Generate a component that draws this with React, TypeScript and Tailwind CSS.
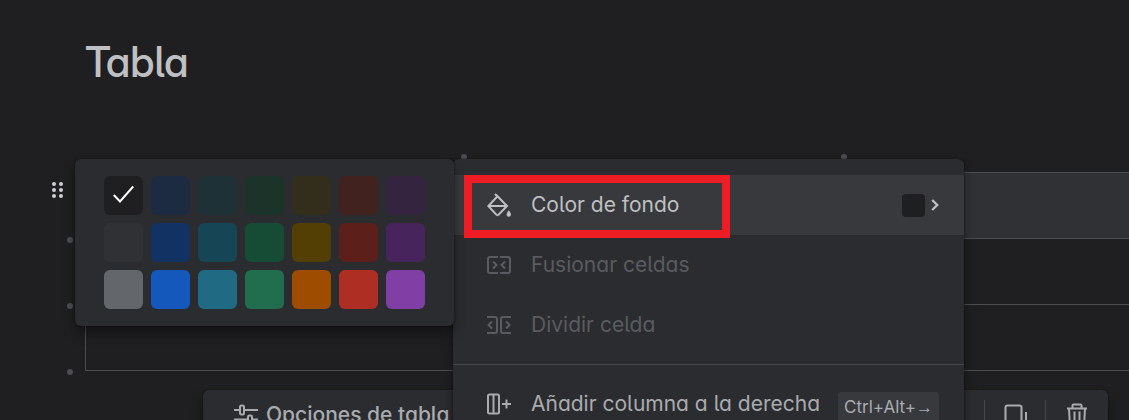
import React, { useState } from 'react';

const swatches = [
  { name: 'Predeterminado', className: 'bg-[#1f1f21]' },
  { name: 'Azul oscuro', className: 'bg-[#1c2b42]' },
  { name: 'Turquesa oscuro', className: 'bg-[#1e3137]' },
  { name: 'Verde oscuro', className: 'bg-[#1c3329]' },
  { name: 'Amarillo oscuro', className: 'bg-[#332e1b]' },
  { name: 'Rojo oscuro', className: 'bg-[#42221f]' },
  { name: 'Morado oscuro', className: 'bg-[#35243f]' },
  { name: 'Gris oscuro', className: 'bg-[#303134]' },
  { name: 'Azul medio', className: 'bg-[#123263]' },
  { name: 'Turquesa medio', className: 'bg-[#164555]' },
  { name: 'Verde medio', className: 'bg-[#164b35]' },
  { name: 'Amarillo medio', className: 'bg-[#533f04]' },
  { name: 'Rojo medio', className: 'bg-[#5d1f1a]' },
  { name: 'Morado medio', className: 'bg-[#48245d]' },
  { name: 'Gris', className: 'bg-[#63666b]' },
  { name: 'Azul', className: 'bg-[#1558bc]' },
  { name: 'Turquesa', className: 'bg-[#206a83]' },
  { name: 'Verde', className: 'bg-[#216e4e]' },
  { name: 'Naranja', className: 'bg-[#9e4c00]' },
  { name: 'Rojo', className: 'bg-[#ae2e24]' },
  { name: 'Morado', className: 'bg-[#803fa5]' },
];

const Icon: React.FC<{ children: React.ReactNode }> = ({ children }) => (
  <svg className="size-6 shrink-0" viewBox="0 0 24 24" fill="none" stroke="currentColor" strokeWidth="2" aria-hidden="true">
    {children}
  </svg>
);

const PaintBucketIcon = () => (
  <Icon>
    <path d="M8 1l2.500 2.500M10.500 3.200L20 13l-8.300 8.600c-.7.7-1.700.7-2.400 0L1.300 13z M1.500 13H20" />
    <path d="M21.800 17.300c1.400 2 2.200 3.200 2.200 4.300a2.200 2.200 0 0 1-4.400 0c0-1.100.8-2.300 2.200-4.300z" fill="currentColor" stroke="none" />
  </Icon>
);

const MergeIcon = () => (
  <Icon>
    <path d="M11 4H3a2 2 0 0 0-2 2v12a2 2 0 0 0 2 2h8M13 4h8a2 2 0 0 1 2 2v12a2 2 0 0 1-2 2h-8" />
    <path d="M6 8.500L9.500 12 6 15.500M18 8.500L14.500 12l3.500 3.500" />
  </Icon>
);

const SplitIcon = () => (
  <Icon>
    <path d="M0 4h8a2 2 0 0 1 2 2v12a2 2 0 0 1-2 2H0M24 4h-8a2 2 0 0 0-2 2v12a2 2 0 0 0 2 2h8" />
    <path d="M5 8.500L1.500 12 5 15.500M19 8.500l3.500 3.500-3.500 3.500" />
  </Icon>
);

const AddColumnIcon = () => (
  <Icon>
    <rect x="1" y="2.500" width="11" height="19" rx="1.500" />
    <path d="M6.500 2.500v19" />
    <path d="M15 12h9M19.500 7.500v9" />
  </Icon>
);

const SlidersIcon = () => (
  <Icon>
    <path d="M0 7h5M11 7h13M0 16.500h13M19 16.500h5" />
    <rect x="6" y="2.500" width="4" height="9" rx="1.500" />
    <rect x="14" y="12.500" width="4" height="9" rx="1.500" />
  </Icon>
);

const CopyIcon = () => (
  <Icon>
    <rect x="2.500" y="2.500" width="16" height="17" rx="2" />
    <path d="M23 9v11a2 2 0 0 1-2 2H9" />
  </Icon>
);

const TrashIcon = () => (
  <Icon>
    <path d="M3 5.500h20M8.500 5.500V2.500a1 1 0 0 1 1-1h7a1 1 0 0 1 1 1v3M5 5.500l.8 14.500a2 2 0 0 0 2 2h10.400a2 2 0 0 0 2-2L21 5.500M10.500 8.500v10M15.500 8.500v10" />
  </Icon>
);

const ResizeDot: React.FC<{ className: string }> = ({ className }) => (
  <span className={`absolute size-1.5 rounded-full bg-[#4b4d51] ${className}`} />
);

const ColorPalette: React.FC = () => {
  const [selected, setSelected] = useState(0);

  return (
    <div className="relative z-10 grid grid-cols-[repeat(7,39px)] gap-2 rounded-md bg-[#2b2c2f] px-[29px] py-[17px] shadow-[0_8px_12px_rgba(1,4,4,0.36),0_0_2px_rgba(1,4,4,0.6)]">
      {swatches.map((swatch, idx) => (
        <button
          key={swatch.name}
          onClick={() => setSelected(idx)}
          aria-label={swatch.name}
          className={`flex size-[39px] items-center justify-center rounded-md text-white ${swatch.className}`}
        >
          {selected === idx && (
            <svg className="size-6" viewBox="0 0 24 24" fill="none" stroke="currentColor" strokeWidth="2" aria-hidden="true">
              <path d="M1.800 11L8 17.500 21.200 2.500" />
            </svg>
          )}
        </button>
      ))}
    </div>
  );
};

const CellMenu: React.FC = () => (
  <div className="-ml-px flex w-[511px] flex-col rounded-md bg-[#2b2c2f] pt-4 text-[21px] shadow-[0_8px_12px_rgba(1,4,4,0.36),0_0_2px_rgba(1,4,4,0.6)]">
    <button className="flex h-[60px] items-center gap-5 bg-[#38393c] pr-[25px] pl-[34px] text-[#bfc0c3]">
      <PaintBucketIcon />
      <span>Color de fondo</span>
      <span className="ml-auto flex items-center gap-1.5">
        <span className="size-[23px] rounded bg-[#1f1f21]" />
        <svg className="h-3 w-2" viewBox="0 0 8 12" fill="none" stroke="currentColor" strokeWidth="2.400" aria-hidden="true">
          <path d="M1.200 1L6.200 6l-5 5" />
        </svg>
      </span>
    </button>
    <button disabled className="flex h-[60px] items-center gap-5 pr-[25px] pl-[34px] text-[#5a5b60]">
      <MergeIcon />
      <span>Fusionar celdas</span>
    </button>
    <button disabled className="flex h-[60px] items-center gap-5 pr-[25px] pl-[34px] text-[#5a5b60]">
      <SplitIcon />
      <span>Dividir celda</span>
    </button>
    <div className="mt-[9px] border-t border-[#46474b] pt-2">
      <button className="flex h-[62px] w-full items-center justify-between pr-[25px] pl-[34px] text-[#a9abaf]">
        <span className="flex items-center gap-5 whitespace-nowrap">
          <AddColumnIcon />
          Añadir columna a la derecha
        </span>
        <kbd className="mt-1.5 rounded bg-[#38393c] px-1.5 text-[17px] leading-[30px] whitespace-nowrap [font-family:Inter,sans-serif]">
          Ctrl+Alt+<span className="[font-family:'Liberation_Sans',sans-serif]">→</span>
        </kbd>
      </button>
    </div>
  </div>
);

const TableToolbar: React.FC = () => (
  <div className="absolute top-[218px] right-[21px] left-[118px] flex h-[50px] items-center rounded-md bg-[#2b2c2f] pr-5 pl-[31px] text-[#a9abaf] shadow-[0_8px_12px_rgba(1,4,4,0.36),0_0_2px_rgba(1,4,4,0.6)]">
    <button className="flex items-center gap-2 text-[21px] font-medium">
      <SlidersIcon />
      Opciones de tabla
    </button>
    <div className="ml-auto flex items-center gap-[18px]">
      <span className="h-[30px] w-px bg-[#46474b]" />
      <button aria-label="Copiar">
        <CopyIcon />
      </button>
      <span className="h-[30px] w-px bg-[#46474b]" />
      <button aria-label="Eliminar">
        <TrashIcon />
      </button>
    </div>
  </div>
);

const App: React.FC = () => {
  return (
    <main className="h-screen overflow-hidden bg-[#1f1f21] pt-9 pl-[85px] font-[Inter,sans-serif] [font-feature-settings:'cv11','cv05']">
      <h1 className="mb-[84px] text-[42px] leading-[52px] font-medium text-[#bfc0c3] [font-family:'Inter_Display',Inter,sans-serif]">Tabla</h1>

      <div className="relative">
        <table className="w-full table-fixed border-collapse border-y border-l border-[#4b4d51]">
          <colgroup>
            <col className="w-[379px]" />
            <col className="w-[380px]" />
            <col />
          </colgroup>
          <thead>
            <tr className="h-[66px] bg-[#303134]">
              <th className="border-r border-[#4b4d51]" />
              <th className="border-r border-[#4b4d51]" />
              <th />
            </tr>
          </thead>
          <tbody>
            {[1, 2].map((row) => (
              <tr key={row} className="h-[66px] border-t border-[#4b4d51]">
                <td className="border-r border-[#4b4d51]" />
                <td className="border-r border-[#4b4d51]" />
                <td />
              </tr>
            ))}
          </tbody>
        </table>

        {/* Row and column handles */}
        <ResizeDot className="top-[-18px] left-[376px]" />
        <ResizeDot className="top-[-18px] left-[756px]" />
        <ResizeDot className="top-[65px] left-[-18px]" />
        <ResizeDot className="top-[131px] left-[-18px]" />
        <ResizeDot className="top-[197px] left-[-18px]" />
        <button aria-label="Arrastrar" className="absolute top-2.5 left-[-33px] grid grid-cols-2 gap-x-[3px] gap-y-0.5">
          {[1, 2, 3, 4, 5, 6].map((dot) => (
            <span key={dot} className="size-1 rounded-full bg-[#cecfd2]" />
          ))}
        </button>

        <TableToolbar />

        <div className="absolute top-[-13px] left-[-10px] flex items-start">
          <ColorPalette />
          <CellMenu />
        </div>

        {/* Highlight around the background color option */}
        <div className="pointer-events-none absolute top-[3px] left-[379px] z-20 h-[63px] w-[266px] border-8 border-[#ee1c24]" />
      </div>
    </main>
  );
};

export default App;
